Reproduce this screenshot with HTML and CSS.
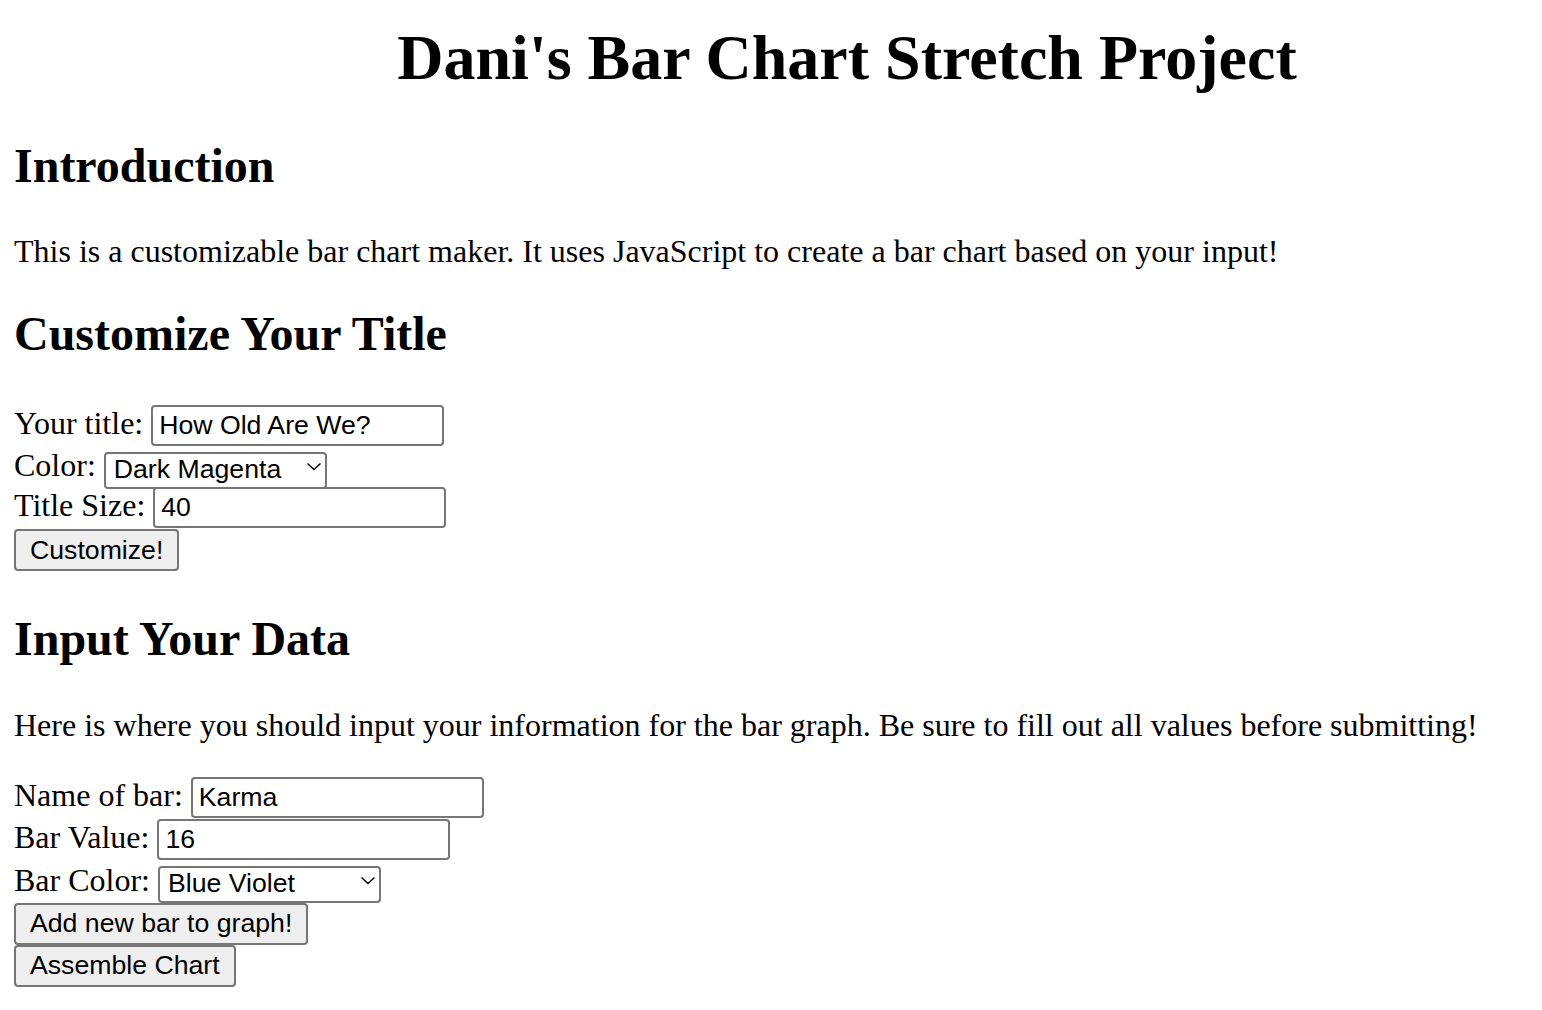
FILE: index.html
```html
<!DOCTYPE html>
<html lang="en">
<head>
<meta charset="utf-8">
<title>Dani's Bar Chart Stretch Project</title>
<link rel="stylesheet" href="styles.css">
</head>
<body>
<h1 class="page-title">Dani's Bar Chart Stretch Project</h1>

<section class="intro">
  <h2 class="section-heading">Introduction</h2>
  <p class="section-text">This is a customizable bar chart maker. It uses JavaScript to create a bar chart based on your input!</p>
</section>

<section class="customize">
  <h2 class="section-heading">Customize Your Title</h2>
  <form class="form">
    <div class="row row-input">
      <label class="label" for="title">Your title:</label>
      <input class="text-input" id="title" type="text" value="How Old Are We?">
    </div>
    <div class="row row-select">
      <label class="label" for="title-color">Color:</label>
      <span class="select-wrap">
        <select class="select" id="title-color">
          <option>Dark Magenta</option>
        </select>
        <svg class="chevron" width="16" height="9" viewBox="0 0 16 9"><path d="M1.5 1.5 L8 7.5 L14.5 1.5" fill="none" stroke="#000" stroke-width="1.5"/></svg>
      </span>
    </div>
    <div class="row row-input">
      <label class="label" for="title-size">Title Size:</label>
      <input class="text-input" id="title-size" type="text" value="40">
    </div>
    <div class="row row-button">
      <button class="button" type="button">Customize!</button>
    </div>
  </form>
</section>

<section class="data">
  <h2 class="section-heading">Input Your Data</h2>
  <p class="section-text">Here is where you should input your information for the bar graph. Be sure to fill out all values before submitting!</p>
  <form class="form">
    <div class="row row-input">
      <label class="label" for="bar-name">Name of bar:</label>
      <input class="text-input" id="bar-name" type="text" value="Karma">
    </div>
    <div class="row row-input">
      <label class="label" for="bar-value">Bar Value:</label>
      <input class="text-input" id="bar-value" type="text" value="16">
    </div>
    <div class="row row-select">
      <label class="label" for="bar-color">Bar Color:</label>
      <span class="select-wrap">
        <select class="select" id="bar-color">
          <option>Blue Violet</option>
        </select>
        <svg class="chevron" width="16" height="9" viewBox="0 0 16 9"><path d="M1.5 1.5 L8 7.5 L14.5 1.5" fill="none" stroke="#000" stroke-width="1.5"/></svg>
      </span>
    </div>
    <div class="row row-button">
      <button class="button" type="button">Add new bar to graph!</button>
    </div>
    <div class="row row-button">
      <button class="button" type="button">Assemble Chart</button>
    </div>
  </form>
</section>
</body>
</html>
```

FILE: styles.css
```css
html, body {
  background: #ffffff;
}

body {
  margin: 0 14px;
  padding: 0;
  color: #000000;
  font-family: "Liberation Serif", "Times New Roman", serif;
  font-size: 32px;
  line-height: 37px;
}

.page-title {
  margin: 21px 0 0;
  padding-left: 152px;
  text-align: center;
  font-size: 64px;
  line-height: 74px;
  font-weight: bold;
}

.section-heading {
  margin: 0;
  font-size: 48px;
  line-height: 56px;
  font-weight: bold;
}

.section-text {
  margin: 0;
}

.intro {
  margin-top: 43px;
}

.intro .section-text {
  margin-top: 39px;
}

.customize {
  margin-top: 36px;
}

.customize .form {
  margin-top: 43px;
}

.data {
  margin-top: 40px;
}

.data .section-text {
  margin-top: 40px;
}

.data .form {
  margin-top: 33px;
}

.form {
  display: flex;
  flex-direction: column;
  align-items: flex-start;
}

.row {
  display: flex;
  align-items: center;
  gap: 8px;
}

.row-input {
  height: 42px;
  align-items: flex-start;
}

.row-select {
  height: 40px;
}

.data .row-select {
  height: 41.5px;
}

.row-button {
  height: 42px;
  align-items: flex-start;
}

.label {
  white-space: nowrap;
}

.row-select .label {
  margin-top: -3px;
}

.text-input {
  box-sizing: border-box;
  width: 293px;
  height: 41px;
  margin: 0;
  padding: 0 4px 0 6px;
  border: 2px solid #767676;
  border-radius: 4px;
  background: #ffffff;
  color: #000000;
  font-family: "Liberation Sans", Arial, sans-serif;
  font-size: 26.67px;
}

.select-wrap {
  position: relative;
  display: inline-block;
  height: 37px;
}

.select {
  -webkit-appearance: none;
  appearance: none;
  box-sizing: border-box;
  width: 223px;
  height: 37px;
  margin: 0;
  padding: 0 30px 3px 8px;
  border: 2px solid #767676;
  border-radius: 4px;
  background: #ffffff;
  color: #000000;
  font-family: "Liberation Sans", Arial, sans-serif;
  font-size: 26.67px;
}

.chevron {
  position: absolute;
  right: 5px;
  top: 13px;
}

.button {
  box-sizing: border-box;
  height: 42px;
  margin: 0;
  padding: 0 14px;
  border: 2px solid #767676;
  border-radius: 4px;
  background: #efefef;
  color: #000000;
  font-family: "Liberation Sans", Arial, sans-serif;
  font-size: 26.67px;
}
```
